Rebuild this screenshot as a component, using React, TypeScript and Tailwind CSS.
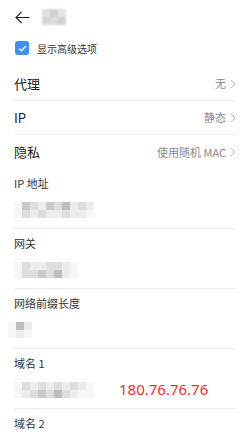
import React from "react";

const font = { fontFamily: '"Noto Sans CJK SC", "Noto Sans", sans-serif' };

// pixelated placeholder for the masked values
const Masked = ({ rows }: { rows: string[][] }) => (
  <div className="flex flex-col blur-[0.6px]">
    {rows.map((row, i) => (
      <div key={i} className="flex">
        {row.map((c, j) => (
          <div key={j} className="w-2 h-2" style={{ backgroundColor: c }} />
        ))}
      </div>
    ))}
  </div>
);

const Chevron = () => (
  <svg width="6" height="10" viewBox="0 0 6 10" className="ml-1">
    <path d="M1 1l4 4-4 4" fill="none" stroke="#b5b5b5" strokeWidth="1" />
  </svg>
);

const NavRow = ({ label, value, divider = true }: { label: string; value: string; divider?: boolean }) => (
  <div className={`flex items-center justify-between h-[34px] ${divider ? "border-b border-[#ececec]" : ""}`}>
    <span className="text-[13px] text-[#1a1a1a]">{label}</span>
    <span className="flex items-center text-[11px] text-[#8a8a8a]">
      {value}
      <Chevron />
    </span>
  </div>
);

const FieldRow = ({
  label,
  children,
  divider = true,
}: {
  label: string;
  children?: React.ReactNode;
  divider?: boolean;
}) => (
  <div className={`flex flex-col ${divider ? "border-b border-[#ececec]" : ""}`}>
    <span className="text-[11px] text-[#333] pt-[6px] leading-[16px]">{label}</span>
    <div className="h-[37px] flex items-center">{children}</div>
  </div>
);

const a = "#c9c9c9";
const b = "#dedede";
const c = "#ececec";
const d = "#f6f6f6";
const e = "#bdbdbd";

export default function App() {
  return (
    <div className="w-[250px] h-[435px] bg-white overflow-hidden" style={font}>
      <div className="flex items-center h-[34px] px-[15px]">
        <svg width="15" height="13" viewBox="0 0 15 13">
          <path d="M6.5 0.8L1 6.5l5.5 5.7M1 6.5h13.5" fill="none" stroke="#222" strokeWidth="1.2" />
        </svg>
        <div className="ml-3 flex flex-col blur-[1px]">
          <div className="flex">
            <div className="w-2 h-2 bg-[#e0e0e0]" />
            <div className="w-2 h-2 bg-[#d0d0d0]" />
            <div className="w-2 h-2 bg-[#e4e4e4]" />
          </div>
          <div className="flex">
            <div className="w-2 h-2 bg-[#d6d6d6]" />
            <div className="w-2 h-2 bg-[#dcdcdc]" />
            <div className="w-2 h-2 bg-[#d2d2d2]" />
          </div>
        </div>
      </div>
      <div className="flex items-center h-[28px] px-[15px]">
        <div className="w-[14px] h-[14px] rounded-[3px] bg-[#3d8ef7] flex items-center justify-center">
          <svg width="9" height="7" viewBox="0 0 9 7">
            <path d="M1 3.5l2.4 2.3L8 1" fill="none" stroke="#fff" strokeWidth="1.5" />
          </svg>
        </div>
        <span className="ml-2 text-[10px] text-[#333]">显示高级选项</span>
      </div>
      <div className="px-[14px] mt-[5px]">
        <NavRow label="代理" value="无" />
        <NavRow label="IP" value="静态" />
        <NavRow label="隐私" value="使用随机 MAC" divider={false} />
        <FieldRow label="IP 地址">
          <Masked rows={[[d, a, b, c, a, b, e, c, b, c], [d, b, c, b, c, c, b, c, c, d]]} />
        </FieldRow>
        <FieldRow label="网关">
          <Masked rows={[[d, b, c, c, b, b, c, d], [d, b, b, a, b, e, c, d]]} />
        </FieldRow>
        <FieldRow label="网络前缀长度">
          <div className="-ml-[6px]">
            <Masked rows={[[d, e, c], [d, c, d]]} />
          </div>
        </FieldRow>
        <FieldRow label="域名 1">
          <Masked rows={[[d, b, c, b, c, b, c, b, c, d], [d, c, b, a, b, e, b, c, d, d]]} />
          <span className="ml-[25px] text-[15px] text-[#e8322e]" style={{ fontFamily: '"Noto Sans", sans-serif' }}>
            180.76.76.76
          </span>
        </FieldRow>
        <FieldRow label="域名 2" divider={false} />
      </div>
    </div>
  );
}
